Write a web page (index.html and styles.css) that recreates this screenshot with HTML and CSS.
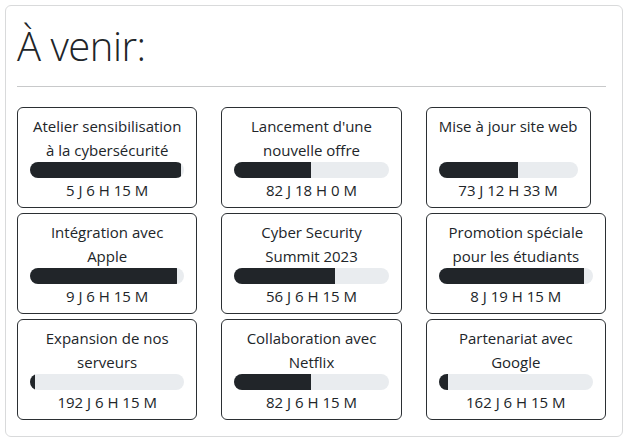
FILE: index.html
```html
<!DOCTYPE html>
<html lang="fr">
<head>
<meta charset="utf-8">
<link rel="stylesheet" href="styles.css">
</head>
<body>
<div class="panel">
  <h1 class="title">À venir:</h1>
  <hr class="sep">
  <div class="grid">
    <div class="card"><div class="name">Atelier sensibilisation à la cybersécurité</div><div class="bar"><div class="fill" style="width:98%"></div></div><div class="time">5 J 6 H 15 M</div></div>
    <div class="card"><div class="name">Lancement d'une nouvelle offre</div><div class="bar"><div class="fill" style="width:50%"></div></div><div class="time">82 J 18 H 0 M</div></div>
    <div class="card"><div class="name">Mise à jour site web</div><div class="bar"><div class="fill" style="width:57%"></div></div><div class="time">73 J 12 H 33 M</div></div>
    <div class="card"><div class="name">Intégration avec Apple</div><div class="bar"><div class="fill" style="width:95%"></div></div><div class="time">9 J 6 H 15 M</div></div>
    <div class="card"><div class="name">Cyber Security Summit 2023</div><div class="bar"><div class="fill" style="width:65%"></div></div><div class="time">56 J 6 H 15 M</div></div>
    <div class="card"><div class="name">Promotion spéciale pour les étudiants</div><div class="bar"><div class="fill" style="width:94%"></div></div><div class="time">8 J 19 H 15 M</div></div>
    <div class="card"><div class="name">Expansion de nos serveurs</div><div class="bar"><div class="fill" style="width:3%"></div></div><div class="time">192 J 6 H 15 M</div></div>
    <div class="card"><div class="name">Collaboration avec Netflix</div><div class="bar"><div class="fill" style="width:50%"></div></div><div class="time">82 J 6 H 15 M</div></div>
    <div class="card"><div class="name">Partenariat avec Google</div><div class="bar"><div class="fill" style="width:6%"></div></div><div class="time">162 J 6 H 15 M</div></div>
  </div>
</div>
</body>
</html>
```
FILE: styles.css
```css
html, body {
  margin: 0;
  padding: 0;
  background: #fff;
}
body {
  font-family: "Open Sans", "Noto Sans", sans-serif;
  color: #212529;
  padding: 5px 6px 0 5px;
}
.panel {
  border: 1px solid #d9dadb;
  border-radius: 6px;
  padding: 12px 16px 16px 11px;
  width: 589px;
}
.title {
  margin: 4px 0 0 0;
  font-size: 40px;
  font-weight: 300;
  line-height: 48px;
  letter-spacing: -0.5px;
}
.sep {
  margin: 16px 0 20px 0;
  border: 0;
  border-top: 1px solid #c8c9ca;
}
.grid {
  display: grid;
  grid-template-columns: repeat(3, 1fr);
  column-gap: 24px;
  row-gap: 5px;
}
.card {
  justify-self: start;
  box-sizing: border-box;
  max-width: 100%;
  border: 1px solid #2b2f33;
  border-radius: 6px;
  padding: 6px 12px 5px 12px;
  text-align: center;
  font-size: 15px;
  line-height: 24px;
  display: flex;
  flex-direction: column;
}
.name {
  min-height: 48px;
}
.bar {
  height: 16px;
  background: #e9ecef;
  border-radius: 8px;
  overflow: hidden;
}
.fill {
  height: 100%;
  background: #212529;
}
.time {
  line-height: 24px;
}
```
